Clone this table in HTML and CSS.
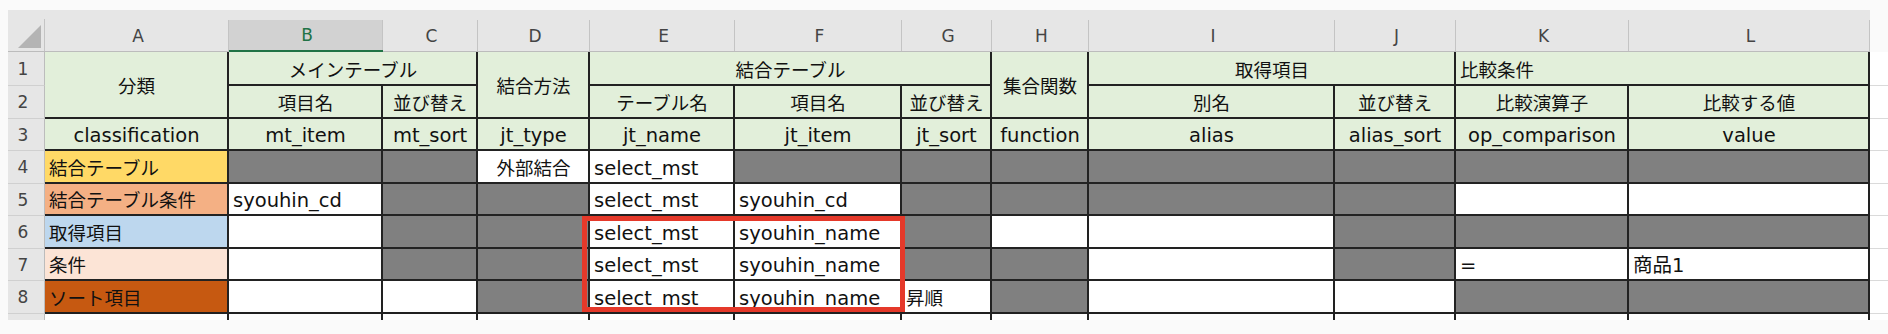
FILE: index.html
```html
<!DOCTYPE html>
<html lang="ja">
<head>
<meta charset="utf-8">
<title>Sheet</title>
<link rel="stylesheet" href="styles.css">
</head>
<body>
<div class="sheet">
  <div class="corner"><svg width="23" height="23" viewBox="0 0 23 23"><polygon points="23,0 23,23 0,23" fill="#b4b4b4"/></svg></div>
  <div class="strip"></div>
  <div class="rest-top"></div>
  <div class="ch">A</div>
  <div class="ch sel">B</div>
  <div class="ch">C</div>
  <div class="ch">D</div>
  <div class="ch">E</div>
  <div class="ch">F</div>
  <div class="ch">G</div>
  <div class="ch">H</div>
  <div class="ch">I</div>
  <div class="ch">J</div>
  <div class="ch">K</div>
  <div class="ch">L</div>

  <div class="rh">1</div>
  <div class="c hd ja mid r2">分類</div>
  <div class="c hd ja s2">メインテーブル</div>
  <div class="c hd ja mid r2">結合方法</div>
  <div class="c hd ja s3">結合テーブル</div>
  <div class="c hd ja mid r2">集合関数</div>
  <div class="c hd ja s2">取得項目</div>
  <div class="c hd ja s2 left">比較条件</div>
  <div class="x"></div>

  <div class="rh">2</div>
  <div class="c hd ja">項目名</div>
  <div class="c hd ja">並び替え</div>
  <div class="c hd ja">テーブル名</div>
  <div class="c hd ja">項目名</div>
  <div class="c hd ja">並び替え</div>
  <div class="c hd ja">別名</div>
  <div class="c hd ja">並び替え</div>
  <div class="c hd ja">比較演算子</div>
  <div class="c hd ja">比較する値</div>
  <div class="x"></div>

  <div class="rh">3</div>
  <div class="c hd">classification</div>
  <div class="c hd">mt_item</div>
  <div class="c hd">mt_sort</div>
  <div class="c hd">jt_type</div>
  <div class="c hd">jt_name</div>
  <div class="c hd">jt_item</div>
  <div class="c hd">jt_sort</div>
  <div class="c hd">function</div>
  <div class="c hd">alias</div>
  <div class="c hd">alias_sort</div>
  <div class="c hd">op_comparison</div>
  <div class="c hd">value</div>
  <div class="x"></div>

  <div class="rh">4</div>
  <div class="c ja k-join">結合テーブル</div>
  <div class="c g"></div>
  <div class="c g"></div>
  <div class="c w ja ctr">外部結合</div>
  <div class="c w">select_mst</div>
  <div class="c g"></div>
  <div class="c g"></div>
  <div class="c g"></div>
  <div class="c g"></div>
  <div class="c g"></div>
  <div class="c g"></div>
  <div class="c g"></div>
  <div class="x"></div>

  <div class="rh">5</div>
  <div class="c ja k-cond-join">結合テーブル条件</div>
  <div class="c w">syouhin_cd</div>
  <div class="c g"></div>
  <div class="c g"></div>
  <div class="c w">select_mst</div>
  <div class="c w">syouhin_cd</div>
  <div class="c g"></div>
  <div class="c g"></div>
  <div class="c g"></div>
  <div class="c g"></div>
  <div class="c w"></div>
  <div class="c w"></div>
  <div class="x"></div>

  <div class="rh">6</div>
  <div class="c ja k-item">取得項目</div>
  <div class="c w"></div>
  <div class="c g"></div>
  <div class="c g"></div>
  <div class="c w">select_mst</div>
  <div class="c w">syouhin_name</div>
  <div class="c g"></div>
  <div class="c w"></div>
  <div class="c w"></div>
  <div class="c g"></div>
  <div class="c g"></div>
  <div class="c g"></div>
  <div class="x"></div>

  <div class="rh">7</div>
  <div class="c ja k-cond">条件</div>
  <div class="c w"></div>
  <div class="c g"></div>
  <div class="c g"></div>
  <div class="c w">select_mst</div>
  <div class="c w">syouhin_name</div>
  <div class="c g"></div>
  <div class="c g"></div>
  <div class="c w"></div>
  <div class="c g"></div>
  <div class="c w">=</div>
  <div class="c w">商品1</div>
  <div class="x"></div>

  <div class="rh">8</div>
  <div class="c ja k-sort">ソート項目</div>
  <div class="c w"></div>
  <div class="c w"></div>
  <div class="c g"></div>
  <div class="c w">select_mst</div>
  <div class="c w">syouhin_name</div>
  <div class="c w ja">昇順</div>
  <div class="c g"></div>
  <div class="c w"></div>
  <div class="c w"></div>
  <div class="c g"></div>
  <div class="c g"></div>
  <div class="x"></div>

  <div class="rh"></div>
  <div class="c w"></div>
  <div class="c w"></div>
  <div class="c w"></div>
  <div class="c w"></div>
  <div class="c w"></div>
  <div class="c w"></div>
  <div class="c w"></div>
  <div class="c w"></div>
  <div class="c w"></div>
  <div class="c w"></div>
  <div class="c w"></div>
  <div class="c w"></div>
  <div class="x"></div>

  <div class="mark"></div>
</div>
</body>
</html>
```

FILE: styles.css
```css
* {
  box-sizing: border-box;
  margin: 0;
  padding: 0;
}

html, body {
  background: #fafafa;
}

body {
  padding: 10px 0 0 8px;
  height: 334px;
  overflow: hidden;
}

.sheet {
  position: relative;
  width: 1880px;
  height: 310px;
  overflow: hidden;
  background: #fff;
  display: grid;
  grid-template-columns: 37px 184px 154px 95px 112px 145px 167px 90px 97px 246px 121px 173px 241px 18px;
  grid-template-rows: 10px 32px 34px 33px 32px 33px 32px 33px 32px 33px 33px;
  font-family: "DejaVu Sans", "Noto Sans CJK JP", sans-serif;
  color: #111;
}

/* column header band */
.corner {
  grid-column: 1;
  grid-row: 1 / 3;
  background: linear-gradient(#c4c4c4, #c4c4c4) right bottom / 1px 32px no-repeat, #e6e6e6;
  border-bottom: 1px solid #bcbcbc;
  display: flex;
  align-items: flex-end;
  justify-content: flex-end;
  padding: 0 4px 3px 0;
}

.corner svg {
  display: block;
}

.strip {
  grid-column: 2 / 14;
  grid-row: 1;
  background: #e6e6e6;
}

.rest-top {
  grid-column: 14;
  grid-row: 1 / 3;
  background: #fafafa;
}

.ch {
  background: linear-gradient(#c4c4c4, #c4c4c4) right top / 1px 100% no-repeat, #e6e6e6;
  border-bottom: 1px solid #bcbcbc;
  display: flex;
  align-items: center;
  justify-content: center;
  padding-left: 2px;
  font-size: 17px;
  color: #444;
}

.ch.sel {
  background-color: #d2d2d2;
  color: #217346;
  border-bottom: 2px solid #217346;
}

/* row header */
.rh {
  background: #e6e6e6;
  border-right: 1px solid #bcbcbc;
  border-bottom: 1px solid #d0d0d0;
  display: flex;
  align-items: center;
  justify-content: center;
  padding-right: 6px;
  font-size: 17px;
  color: #444;
}

/* cells */
.c {
  border-right: 2px solid #222;
  border-bottom: 2px solid #222;
  font-size: 19.5px;
  line-height: 24px;
  padding: 0 3px 1px 4px;
  display: flex;
  align-items: flex-end;
  white-space: nowrap;
  overflow: hidden;
  min-width: 0;
}

.ja {
  font-size: 18.5px;
}

.hd {
  background: #e2efda;
  justify-content: center;
}

.hd.left {
  justify-content: flex-start;
}

.mid {
  align-items: center;
  padding-top: 4px;
  padding-bottom: 0;
}

.r2 {
  grid-row: span 2;
}

.s2 {
  grid-column: span 2;
}

.s3 {
  grid-column: span 3;
}

.ctr {
  justify-content: center;
}

.g {
  background: #808080;
}

.w {
  background: #fff;
}

.k-join {
  background: #ffd966;
}

.k-cond-join {
  background: #f4b084;
}

.k-item {
  background: #bdd7ee;
}

.k-cond {
  background: #fce4d6;
}

.k-sort {
  background: #c65911;
}

.x {
  background: #fff;
  border-bottom: 1px solid #dadada;
}

/* red highlight frame drawn over the cells */
.mark {
  position: absolute;
  left: 574px;
  top: 206px;
  width: 323px;
  height: 96px;
  border: 5px solid #e5392a;
}
```
